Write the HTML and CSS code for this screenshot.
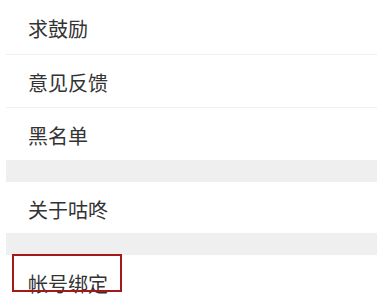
FILE: index.html
```html
<!DOCTYPE html>
<html lang="zh">
<head>
<meta charset="utf-8">
<link rel="stylesheet" href="styles.css">
</head>
<body>
<div class="list">
  <div class="row first">求鼓励</div>
  <div class="row">意见反馈</div>
  <div class="row last">黑名单</div>
  <div class="band"></div>
  <div class="row solo">关于咕咚</div>
  <div class="band"></div>
  <div class="row final">帐号绑定<span class="highlight"></span></div>
</div>
</body>
</html>
```
FILE: styles.css
```css
html, body {
  margin: 0;
  padding: 0;
  background: #ffffff;
}
body {
  width: 385px;
  height: 305px;
  overflow: hidden;
  font-family: "Noto Sans CJK SC", "Noto Sans", sans-serif;
}
.list {
  margin-left: 6px;
  width: 371px;
  display: flex;
  flex-direction: column;
}
.row {
  position: relative;
  height: 53px;
  box-sizing: border-box;
  display: flex;
  align-items: center;
  padding-left: 22px;
  padding-top: 3px;
  font-size: 20px;
  color: #333333;
  border-bottom: 1px solid #efefef;
}
.row.first {
  height: 55px;
  margin-left: 0;
}
.row.last {
  height: 52px;
  border-bottom: none;
}
.row.solo {
  height: 51px;
  border-bottom: none;
}
.row.final {
  height: 50px;
  border-bottom: none;
  padding-top: 2px;
  align-items: flex-start;
  padding-top: 14px;
}
.band {
  height: 22px;
  background: #efefef;
}
.highlight {
  position: absolute;
  left: 6px;
  top: -1px;
  width: 110px;
  height: 38px;
  box-sizing: border-box;
  border: 2px solid #a31818;
}
```
